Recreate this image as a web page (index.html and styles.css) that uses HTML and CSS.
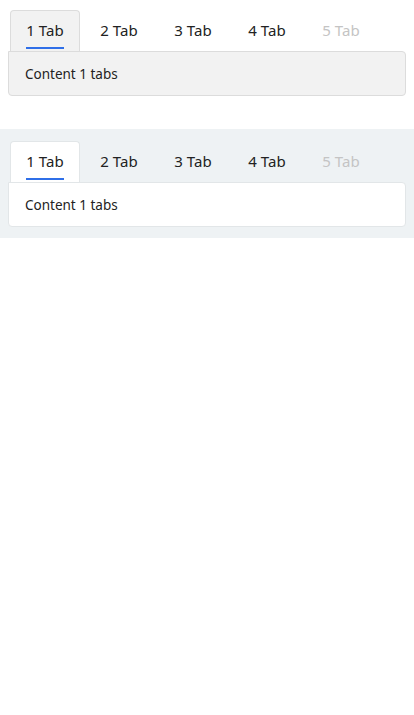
FILE: index.html
```html
<!DOCTYPE html>
<html>
<head>
<meta charset="utf-8">
<link rel="stylesheet" href="styles.css">
</head>
<body>
<section class="demo demo-grey">
  <div class="tabs">
    <div class="tab active"><span class="label">1 Tab</span></div>
    <div class="tab"><span class="label">2 Tab</span></div>
    <div class="tab"><span class="label">3 Tab</span></div>
    <div class="tab"><span class="label">4 Tab</span></div>
    <div class="tab disabled"><span class="label">5 Tab</span></div>
  </div>
  <div class="panel">Content 1 tabs</div>
</section>
<section class="demo demo-white">
  <div class="tabs">
    <div class="tab active"><span class="label">1 Tab</span></div>
    <div class="tab"><span class="label">2 Tab</span></div>
    <div class="tab"><span class="label">3 Tab</span></div>
    <div class="tab"><span class="label">4 Tab</span></div>
    <div class="tab disabled"><span class="label">5 Tab</span></div>
  </div>
  <div class="panel">Content 1 tabs</div>
</section>
</body>
</html>
```
FILE: styles.css
```css
* { box-sizing: border-box; }
body {
  margin: 0;
  font-family: "Noto Sans", "Open Sans", sans-serif;
  color: #222;
  background: #fff;
}
.demo {
  padding: 10px 8px 11px 8px;
}
.demo-grey { padding-bottom: 0; }
.demo-white {
  margin-top: 33px;
  background: #eef2f4;
  padding-top: 12px;
}
.tabs {
  display: flex;
  gap: 4px;
  padding-left: 2px;
}
.tab {
  width: 70px;
  height: 41px;
  border: 1px solid transparent;
  border-bottom: none;
  border-radius: 4px 4px 0 0;
  display: flex;
  align-items: center;
  justify-content: center;
  font-size: 15px;
  color: #222;
}
.tab .label {
  position: relative;
  line-height: 20px;
  top: -1px;
}
.tab.active .label::after {
  content: "";
  position: absolute;
  left: 0;
  right: 0;
  bottom: -9px;
  height: 2px;
  background: #2f6fe8;
}
.tab.disabled { color: #c4c4c4; }
.demo-grey .tab.active {
  background: #f2f2f2;
  border-color: #dcdcdc;
}
.demo-white .tab.active {
  background: #fff;
  border-color: #e2e6e8;
}
.panel {
  height: 45px;
  border: 1px solid #dcdcdc;
  border-radius: 0 4px 4px 4px;
  padding: 0 16px;
  display: flex;
  align-items: center;
  font-size: 13.5px;
  color: #222;
}
.demo-grey .panel { background: #f2f2f2; }
.demo-white .panel {
  background: #fff;
  border-color: #e2e6e8;
}
```
